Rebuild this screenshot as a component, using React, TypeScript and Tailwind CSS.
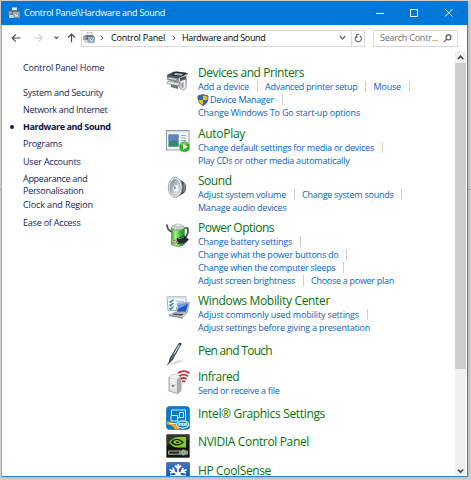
import React, { useLayoutEffect, useRef } from "react";

/** Single line of text whose letters are spaced so that it spans `w` pixels. */
function Fit({ t, w, className = "" }: { t: string; w: number; className?: string }) {
  const ref = useRef<HTMLSpanElement>(null);
  useLayoutEffect(() => {
    const el = ref.current;
    if (!el) return;
    el.style.letterSpacing = "0px";
    const natural = el.getBoundingClientRect().width;
    el.style.letterSpacing = `${(w - natural) / t.length}px`;
  }, [t, w]);
  return (
    <span ref={ref} className={`inline-block whitespace-pre ${className}`}>
      {t}
    </span>
  );
}

function DeviceIcon({ className = "" }: { className?: string }) {
  return (
    <svg viewBox="0 0 12 12" className={className}>
      <path d="M4 .3h5v3.5H4z" fill="#f5f6f7" stroke="#7b858e" strokeWidth=".5" />
      <path d="M.4 4.2 2.6 3.2h7.4l1.3 1.3v3.8H.4z" fill="#5e6870" />
      <path d="M.8 5.2h3M.8 7h2.5" stroke="#e8ebed" strokeWidth=".8" />
      <path d="M1.2 8h4v3h-4z" fill="#d7dadd" />
      <path d="M5 5h6.5v5.7H5z" fill="#c5d5e0" stroke="#78899a" strokeWidth=".5" />
      <circle cx="8.2" cy="8" r="2.2" fill="#e7eff5" stroke="#5c7890" strokeWidth=".8" />
      <path d="m7.5 8.4 1.5-1.3" stroke="#3b668a" strokeWidth=".7" />
    </svg>
  );
}

function PrinterIcon() {
  return (
    <svg viewBox="0 0 24 24" className="h-6 w-6">
      <path d="m1 6 7-3.5 14 1.5-3 7-9 2.5L1 10z" fill="#4b5054" />
      <path d="m7 3.8 3.5-1.3 9.5 1.2-2.2 3.8L6 6.2z" fill="#252a2e" />
      <path d="m9 4 8 .7-1.3 2-8-.9z" fill="#99b6c4" />
      <path d="m1 7.5 12 2v4L1 10.7z" fill="#8d9396" />
      <path d="m13 9 8-4v8l-2 7-7-2z" fill="#c8cccd" />
      <path d="m14 9 6-2v7l-5 3z" fill="#4a4f52" />
      <path d="m2 12 12 2-2 2.8L1 14.5z" fill="#e3e5e5" stroke="#6c7072" strokeWidth=".6" />
      <path d="m5 15.4 7 1.3v3.2l-7-2z" fill="#6d7274" />
      <path d="m14 12 6-2v9l-2 2-4-1.5z" fill="#f1f2f2" stroke="#6c7072" strokeWidth=".7" />
      <path d="m15.5 14 2-1v6l-2-.5z" fill="#8d9396" />
      <path d="m3 9.2 7 1.3" stroke="#f3f3f3" strokeWidth=".8" />
    </svg>
  );
}

function AutoPlayIcon() {
  return (
    <svg viewBox="0 0 24 24" className="h-6 w-6">
      <rect x=".5" y="1.5" width="22.5" height="19.5" fill="#f5f8fa" stroke="#8d9ba5" />
      <path d="M1 2h21.5v2.2H1z" fill="#dce5eb" />
      <rect x="2.5" y="5.5" width="10" height="12" fill="#3486a4" />
      <path d="M2.5 5.5h10v5l-4 2-6-1z" fill="#6083b9" />
      <path d="m2.5 15 5-4 5 3v3.5h-10z" fill="#338c65" />
      <path d="M15 6.5h5M15 9h5M15 11.5h5" stroke="#94a9b7" strokeWidth="1.2" />
      <circle cx="18.5" cy="17.8" r="5.3" fill="#37ad27" stroke="#83c978" strokeWidth=".6" />
      <path d="M14 15.5a5 5 0 0 1 8-1.2c-2 2-5 2.5-8 1.2z" fill="#7bd365" opacity=".7" />
      <path d="m17 14.8 4.6 3-4.6 3z" fill="#fff" />
    </svg>
  );
}

function SoundIcon() {
  return (
    <svg viewBox="0 0 24 24" className="h-6 w-6">
      <defs>
        <linearGradient id="cone" x1="0" y1="0" x2="1" y2="1">
          <stop stopColor="#777f84" />
          <stop offset=".55" stopColor="#c4cbd0" />
          <stop offset="1" stopColor="#f4f7f8" />
        </linearGradient>
      </defs>
      <path d="m10 1.2 6 3.8q4 1.500 4 6.500t-3.500 6.500L11 21.500z" fill="#43494d" />
      <path d="m17.500 6.500 1 .8q2 3.500 0 8.500l-1.300 1z" fill="#858b8f" />
      <ellipse cx="9.2" cy="11.4" rx="6.9" ry="10.1" fill="#eceeef" stroke="#a0a5a8" />
      <ellipse cx="9" cy="11.4" rx="5.1" ry="8.1" fill="url(#cone)" stroke="#92999d" strokeWidth=".6" />
      <ellipse cx="9.8" cy="12.2" rx="2.5" ry="3.2" fill="#eef6fa" />
      <ellipse cx="8.8" cy="11.8" rx="1" ry="1.7" fill="#86959e" />
    </svg>
  );
}

function PowerIcon() {
  return (
    <svg viewBox="0 0 24 24" className="h-6 w-6">
      <defs>
        <linearGradient id="cell">
          <stop stopColor="#3c9f30" />
          <stop offset=".3" stopColor="#a8f28c" />
          <stop offset=".65" stopColor="#3fbd35" />
          <stop offset="1" stopColor="#168719" />
        </linearGradient>
      </defs>
      <path d="M1 1.5Q1 7 6 9M18 5h3.5q1.5 4-1 8-2 3-3 5" fill="none" stroke="#424a68" strokeWidth="1.7" />
      <path d="M5.5 4.5v17q6 4 13 0v-17z" fill="url(#cell)" stroke="#388530" strokeWidth=".5" />
      <ellipse cx="12" cy="4.5" rx="6.5" ry="2.6" fill="#cbd3d2" stroke="#78847b" strokeWidth=".6" />
      <ellipse cx="12" cy="2.4" rx="3" ry="1.5" fill="#f2f4f2" stroke="#8b948e" strokeWidth=".5" />
      <path d="m10 16 8-3.500 5 4-3.500 3.500-8.500 1z" fill="#252a32" />
      <path d="m12 16 6-2" stroke="#7c858c" />
      <path d="m11 17-6 1.5M12 19l-5 3" stroke="#e9d190" strokeWidth="1.8" />
      <path d="m10.5 17-6 1.5M11.5 19l-5 3" stroke="#5e4e31" strokeWidth=".6" />
    </svg>
  );
}

function MobilityIcon() {
  return (
    <svg viewBox="0 0 24 24" className="h-6 w-6">
      <path d="M1 1.5h19v14H2z" fill="#f4f8fb" stroke="#a3b0bd" />
      <path d="M1 1.5h19v2H1z" fill="#d1dce7" />
      <path d="m3.5 6 1.2 1.2L7.5 4.5m-4 5 1.2 1.2 2.8-2.7m-4 5 1.2 1.2 2.8-2.7" fill="none" stroke="#288bb7" strokeWidth="1.4" />
      <path d="M10 6.2h8M10 9h3" stroke="#a5bccb" strokeWidth="1.1" />
      <path d="m12 8 11.5-.5L21 18H9.5z" fill="#d5dce4" stroke="#8290a2" strokeWidth=".7" />
      <path d="m12.8 9 9.6-.4L20 16.8h-9z" fill="#2855c4" />
      <path d="m12.8 9 9.6-.4-6 3.5-4.8 1.7z" fill="#6f9ae8" />
      <path d="m8 17.5 13 .5-4 4.5L3 20z" fill="#d2d7dc" stroke="#8992a0" strokeWidth=".6" />
      <path d="m8 18.5 9.8.5-2 1.8-9.6-1.1z" fill="#404855" />
      <path d="m3 20 14 2.5v1L3 21z" fill="#727c88" />
    </svg>
  );
}

function PenIcon() {
  return (
    <svg viewBox="0 0 24 24" className="h-6 w-6">
      <path d="m3 22.5 9-4.5 7 1-12 3.5z" fill="#bcbec0" opacity=".55" />
      <path d="M12.7 1.2q3-1 2.6 1L7 17.5 2.5 22 3.8 16z" fill="#27323a" />
      <path d="M13.2 2.1 5 16l-1 4 10-16z" fill="#6f8c9d" />
      <path d="M13.4 2.6 8 12" stroke="#d8e7ee" strokeWidth="1" />
      <path d="m4 17 2.5 1-4 4z" fill="#4b5257" />
      <path d="m1.2 23.2 2.2-3" stroke="#25292c" strokeWidth=".8" />
    </svg>
  );
}

function InfraredIcon() {
  return (
    <svg viewBox="0 0 24 24" className="h-6 w-6">
      <path d="m3 7 4-2.5L15 6v15l-4 2.5L3 21z" fill="#dfe0e1" stroke="#909395" strokeWidth=".8" />
      <path d="m11 9 4-3v15l-4 2.5z" fill="#aaadb0" />
      <path d="m3 7 4-2.5L15 6l-4 3z" fill="#f6f6f6" />
      <path d="M4.5 9.5 9.5 11M4.5 12l5 1.5M4.5 17l5 1" stroke="#fff" strokeWidth="1.2" />
      <circle cx="7" cy="16" r="1.3" fill="#838789" />
      <path d="M12 3q6-3.8 11.5.2M13.5 6q4.5-2.9 8.5.2M15 8.9q3-1.8 5.5.2M16.2 11.6q1.5-1 3 .2" fill="none" stroke="#c1323a" strokeWidth="1.9" />
    </svg>
  );
}

function IntelIcon() {
  return (
    <svg viewBox="0 0 24 24" className="h-6 w-6">
      <rect x=".5" y=".5" width="23" height="23" rx="3" fill="#087cc2" stroke="#075f99" strokeWidth=".6" />
      <path d="M1 15.5q8 0 13 8H3q-2 0-2-2z" fill="#f2a42a" />
      <path d="M.8 18.5q6 0 8 5H3q-2.2 0-2.2-3z" fill="#0b7ab6" />
      <path d="M5.5 9V4h14v10.5M5 9.5h6.5V15H5zM13.5 6.5h4v5h-4zM11.5 12h2M3.5 17.5h7" fill="none" stroke="#d7f0fa" strokeWidth="1" />
      <ellipse cx="16.7" cy="18.5" rx="6" ry="3.6" fill="#1272b1" stroke="#e1f6fc" strokeWidth="1.1" />
      <text x="12" y="20.2" fontSize="5" fill="#fff" fontFamily="Open Sans, sans-serif" fontWeight="700" textLength="9.4">intel</text>
    </svg>
  );
}

function NvidiaIcon() {
  return (
    <svg viewBox="0 0 24 24" className="h-6 w-6">
      <rect x=".3" y=".3" width="23.4" height="23.4" rx="1.2" fill="#111610" stroke="#777b74" strokeWidth=".6" />
      <path d="M1 1h22v5L1 11z" fill="#4e534a" opacity=".55" />
      <path d="M3 8q5-5 9-5h8v10.5H12Q6 13.5 3 8z" fill="#88c927" />
      <path d="M4.5 8q4-4.3 9-2.7 3 1.2 4.5 3.2-6 5-11 1.8-1.8-1.1-2.5-2.3z" fill="#172411" />
      <path d="M7 8q3-3.300 6.500-1.200 1.500.8 2.500 2Q11 12 7 8z" fill="#95d538" />
      <path d="M9.500 8q2-1.500 4 .3-2 2-4-.3z" fill="#1b2714" />
      <rect x="2" y="16.5" width="20" height="4.3" rx="1" fill="#a2aa9f" />
      <rect x="3.2" y="17.5" width="10" height="2.2" fill="#232b21" />
      <circle cx="17.5" cy="18.5" r="2.8" fill="#c5cbc1" stroke="#657063" />
      <circle cx="17.5" cy="18.5" r="1.2" fill="#5c9a38" />
    </svg>
  );
}

function CoolSenseIcon() {
  return (
    <svg viewBox="0 0 24 24" className="h-6 w-6">
      <defs>
        <linearGradient id="cool" x1="0" y1="0" x2="0" y2="1">
          <stop stopColor="#4272c4" />
          <stop offset=".5" stopColor="#165ab4" />
          <stop offset="1" stopColor="#1388dc" />
        </linearGradient>
      </defs>
      <rect x=".5" y=".5" width="23" height="23" rx="1" fill="url(#cool)" stroke="#2659a3" strokeWidth=".7" />
      <path d="M12 2v20M3.5 7.5l17 9M20.5 7.5l-17 9M9 3.5l3 3 3-3M4 11l4.2-1.2L7 5.8M20 11l-4.2-1.2L17 5.8M4 13.5l4 1.2-1 4M20 13.5l-4 1.2 1 4" fill="none" stroke="#fff" strokeWidth="1.8" />
    </svg>
  );
}

function Shield() {
  return (
    <svg viewBox="0 0 12 12" className="mr-[1px] -ml-[1px] h-3 w-3 shrink-0">
      <path d="M6 .5 11 2q.5 7-5 9.7Q.5 9 1 2z" fill="#286bb3" stroke="#4d5359" strokeWidth=".9" />
      <path d="M6 1.2 10.400 2.500v3.400H6zM1.600 5.900H6v5Q2 9 1.600 5.900z" fill="#f5bd2f" />
    </svg>
  );
}

type Link = { t: string; w: number; sep?: boolean; shield?: boolean };
type Section = {
  title: string;
  w: number;
  height: string;
  icon: React.ReactNode;
  shift: string;
  lines: Link[][];
  clipped?: boolean;
};

const sections: Section[] = [
  {
    title: "Devices and Printers", w: 106, height: "h-[61px]", icon: <PrinterIcon />, shift: "mt-[3px]",
    lines: [
      [{ t: "Add a device", w: 51, sep: true }, { t: "Advanced printer setup", w: 92.5, sep: true }, { t: "Mouse", w: 27.5, sep: true }],
      [{ t: "Device Manager", w: 64, sep: true, shield: true }],
      [{ t: "Change Windows To Go start-up options", w: 162 }],
    ],
  },
  {
    title: "AutoPlay", w: 47, height: "h-[47px]", icon: <AutoPlayIcon />, shift: "mt-[2px]",
    lines: [
      [{ t: "Change default settings for media or devices", w: 176, sep: true }],
      [{ t: "Play CDs or other media automatically", w: 151.5 }],
    ],
  },
  {
    title: "Sound", w: 33.5, height: "h-[47px]", icon: <SoundIcon />, shift: "mt-[2px]",
    lines: [
      [{ t: "Adjust system volume", w: 88, sep: true }, { t: "Change system sounds", w: 91.5, sep: true }],
      [{ t: "Manage audio devices", w: 88.5 }],
    ],
  },
  {
    title: "Power Options", w: 76, height: "h-[73px]", icon: <PowerIcon />, shift: "mt-[2px]",
    lines: [
      [{ t: "Change battery settings", w: 94, sep: true }],
      [{ t: "Change what the power buttons do", w: 140.5, sep: true }],
      [{ t: "Change when the computer sleeps", w: 137.5, sep: true }],
      [{ t: "Adjust screen brightness", w: 97, sep: true }, { t: "Choose a power plan", w: 83 }],
    ],
  },
  {
    title: "Windows Mobility Center", w: 132, height: "h-[50px]", icon: <MobilityIcon />, shift: "mt-[1px]",
    lines: [
      [{ t: "Adjust commonly used mobility settings", w: 161, sep: true }],
      [{ t: "Adjust settings before giving a presentation", w: 172 }],
    ],
  },
  { title: "Pen and Touch", w: 74, height: "h-[26px]", icon: <PenIcon />, shift: "-mt-[2px]", lines: [] },
  {
    title: "Infrared", w: 41, height: "h-[37px]", icon: <InfraredIcon />, shift: "mt-0",
    lines: [[{ t: "Send or receive a file", w: 81.5 }]],
  },
  { title: "Intel® Graphics Settings", w: 127, height: "h-[28px]", icon: <IntelIcon />, shift: "-mt-[1px]", lines: [] },
  { title: "NVIDIA Control Panel", w: 111, height: "h-[29px]", icon: <NvidiaIcon />, shift: "-mt-[1px]", lines: [] },
  { title: "HP CoolSense", w: 73, height: "h-[12px]", icon: <CoolSenseIcon />, shift: "-mt-[2px]", lines: [], clipped: true },
];

const nav = [
  { t: ["System and Security"], w: [80] },
  { t: ["Network and Internet"], w: [84.5] },
  { t: ["Hardware and Sound"], w: [87.5], on: true },
  { t: ["Programs"], w: [39] },
  { t: ["User Accounts"], w: [57.5] },
  { t: ["Appearance and", "Personalisation"], w: [64.5, 60.5] },
  { t: ["Clock and Region"], w: [70] },
  { t: ["Ease of Access"], w: [57.5] },
];

export default function App() {
  return (
    <div className="h-[480px] w-[471px] overflow-hidden bg-[#d4d2d2] bg-[linear-gradient(#d4d2d2_189px,#a5a5a5_189px,#a5a5a5_190px,#d4d2d2_190px)] pt-px pl-px font-['Open_Sans','Noto_Sans',sans-serif] text-[9px]">
      <div className="flex h-[476px] w-[467px] flex-col border border-t-0 border-[#2388d8] border-l-[#75b3e4] bg-white shadow-[1px_1px_3px_#9998]">
        <header className="-mx-px flex h-6 shrink-0 items-center bg-[#0078d7] pl-[7px] text-white">
          <DeviceIcon className="mr-[4px] h-3 w-3" />
          <Fit t={"Control Panel\\Hardware and Sound"} w={141} />
          <svg viewBox="0 0 80 10" className="mr-[13px] ml-auto h-[10px] w-20" fill="none" stroke="#fff">
            <path d="M1 5.5h8M35.5 1.5h7v7h-7zM70 1l7.5 7.5M77.5 1 70 8.5" />
          </svg>
        </header>

        <div className="flex h-[26px] shrink-0 items-center pl-[9px]">
          <svg viewBox="0 0 68 12" className="h-3 w-[68px]" fill="none" stroke="#4b4b4b" strokeWidth="1.2">
            <path d="M9.5 6H1.2M4.8 2.4 1.2 6l3.6 3.6" />
            <path d="M23 6h8.3M27.7 2.4 31.3 6l-3.6 3.6" stroke="#cfcfcf" />
            <path d="m43.5 4.6 1.9 1.9 1.9-1.9" />
            <path d="M60.5 10.3V2M57 5.5 60.5 2 64 5.5" />
          </svg>
          <div className="ml-[2px] flex h-[17px] w-[284px] items-center border border-[#d9d9d9] pl-px text-black">
            <DeviceIcon className="h-3 w-3" />
            <svg viewBox="0 0 4 6" className="mr-[7px] ml-[5px] h-[6px] w-1" fill="none" stroke="#555"><path d="m.8.8 2 2.2-2 2.2" /></svg>
            <Fit t="Control Panel" w={54} />
            <svg viewBox="0 0 4 6" className="mr-[6px] ml-[7px] h-[6px] w-1" fill="none" stroke="#555"><path d="m.8.8 2 2.2-2 2.2" /></svg>
            <Fit t="Hardware and Sound" w={83.5} />
            <svg viewBox="0 0 7 6" className="mr-[5px] ml-auto h-[6px] w-[7px]" fill="none" stroke="#666" strokeWidth="1.2"><path d="m.8 1 2.7 3L6.2 1" /></svg>
            <div className="flex h-full w-[13px] items-center justify-center border-l border-[#d9d9d9]">
              <svg viewBox="0 0 9 10" className="h-[10px] w-[9px]" fill="none" stroke="#666" strokeWidth="1.1"><path d="M6 3a3.1 3.1 0 1 1-3.3 0M2.8 5V1.5M5.2 1.5H2.2" /></svg>
            </div>
          </div>
          <div className="ml-2 flex h-[17px] w-[85px] items-center border border-[#d9d9d9] pl-[6px] text-[#6d6d6d]">
            <Fit t="Search Contr..." w={58} />
            <svg viewBox="0 0 9 9" className="ml-[5px] h-[9px] w-[9px]" fill="none" stroke="#555" strokeWidth="1.1"><circle cx="5.5" cy="3.4" r="2.5" /><path d="M3.6 5.2.7 8.2" /></svg>
          </div>
        </div>

        <div className="flex min-h-0 flex-1">
          <nav className="flex w-[164px] shrink-0 flex-col pt-[10px] pl-[21px] text-[#151c55]">
            <div className="mb-[8.75px] flex h-[17px] items-start leading-[13px]"><Fit t="Control Panel Home" w={81.5} /></div>
            {nav.map((n) => (
              <div key={n.t[0]} className={`flex flex-col items-start leading-[12px] ${n.t.length > 1 ? "pb-[2.75px]" : "pb-[5.2px]"}`}>
                {n.t.map((t, i) => (
                  <div key={t} className="flex h-3 items-center">
                    {n.on && <span className="mr-[9px] -ml-[13px] h-1 w-1 rounded-full bg-[#151c55]" />}
                    <Fit t={t} w={n.w[i]} className={n.on ? "font-bold text-[#0c1245]" : ""} />
                  </div>
                ))}
              </div>
            ))}
          </nav>

          <main className="min-w-0 flex-1 overflow-hidden pt-[15px]">
            {sections.map((s) => (
              <section key={s.title} className={`flex ${s.height}`}>
                <div className={`mr-2 h-6 w-6 shrink-0 ${s.shift}`}>{s.icon}</div>
                <div className="min-w-0 flex-1">
                  <h2 className={`text-[12px] text-[#07730b] ${s.clipped ? "h-[12px] pt-px leading-[11px]" : "h-[14px] leading-[13px]"}`}>
                    <Fit t={s.title} w={s.w} className="align-top" />
                  </h2>
                  {s.lines.map((line) => (
                    <div key={line[0].t} className="flex h-[13px] items-center leading-[13px] text-[#0b5fc6]">
                      {line.map((l) => (
                        <React.Fragment key={l.t}>
                          {l.shield && <Shield />}
                          <Fit t={l.t} w={l.w} />
                          {l.sep && <span className="mx-[7.5px] h-[11px] w-px shrink-0 bg-[#cfcfcf]" />}
                        </React.Fragment>
                      ))}
                    </div>
                  ))}
                </div>
              </section>
            ))}
          </main>

          <aside className="mr-px flex w-[11px] shrink-0 flex-col items-center bg-[#f0f0f0]">
            <svg viewBox="0 0 11 12" className="h-[12px] w-[11px] shrink-0" fill="none" stroke="#505050" strokeWidth="1.7"><path d="M2.8 8 5.5 5.3 8.2 8" /></svg>
            <div className="h-[306px] w-full bg-[#cdcdcd]" />
            <svg viewBox="0 0 11 11" className="mt-auto h-[11px] w-[11px]" fill="none" stroke="#505050" strokeWidth="1.7"><path d="M2.8 4.5 5.5 7.2l2.7-2.7" /></svg>
          </aside>
        </div>
      </div>
    </div>
  );
}
